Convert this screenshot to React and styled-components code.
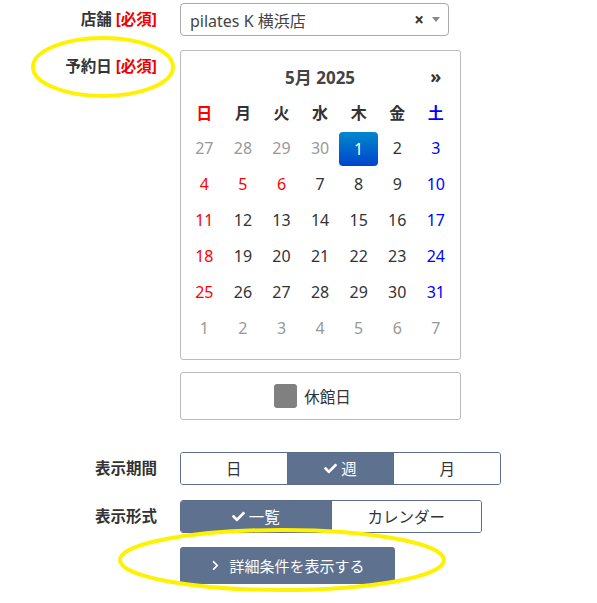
import styled, { createGlobalStyle } from "styled-components"
import { FaCheck, FaChevronRight } from "react-icons/fa"

const GlobalStyle = createGlobalStyle`
    body {
        margin: 0;
        background: #fff;
        font-family: "Noto Sans", "Noto Sans CJK JP", sans-serif;
        color: #333;
    }
`

const Page = styled.div`
    position: relative;
    width: 597px;
    height: 603px;
    padding-top: 3px;
    box-sizing: border-box;
`

const Form = styled.div`
    display: grid;
    grid-template-columns: 157px 280px;
    column-gap: 23px;
    align-items: start;
`

const Label = styled.div`
    text-align: right;
    font-weight: bold;
    font-size: 15.5px;
    line-height: 20px;
    color: #333;
    padding-top: ${({ top }) => top || 0}px;
    margin-top: ${({ gap }) => gap || 0}px;
`

const Req = styled.span`
    color: #e00;
`

const Field = styled.div`
    margin-top: ${({ gap }) => gap || 0}px;
`

const Select = styled.div`
    display: flex;
    align-items: center;
    width: 269px;
    height: 33px;
    box-sizing: border-box;
    border: 1px solid #aaa;
    border-radius: 4px;
    padding: 0 8px 0 9px;
    font-size: 16px;
    color: #444;
`

const SelectText = styled.span`
    flex: 1;
`

const Clear = styled.span`
    font-weight: bold;
    font-size: 17px;
    color: #333;
    margin-right: 8px;
`

const Arrow = styled.span`
    width: 0;
    height: 0;
    border-left: 4px solid transparent;
    border-right: 4px solid transparent;
    border-top: 5px solid #888;
`

const CalendarBox = styled.div`
    width: 281px;
    box-sizing: border-box;
    border: 1px solid #bbb;
    border-radius: 3px;
    padding: 7px 4px 13px;
`

const Grid = styled.div`
    display: grid;
    grid-template-columns: repeat(7, 38.6px);
    grid-auto-rows: 36px;
`

const Title = styled.div`
    grid-column: 2 / 7;
    display: flex;
    align-items: center;
    justify-content: center;
    font-weight: bold;
    font-size: 17px;
    color: #444;
`

const Nav = styled.div`
    grid-column: 7;
    display: flex;
    align-items: center;
    justify-content: center;
    font-weight: bold;
    font-size: 18px;
    color: #333;
`

const Cell = styled.div`
    display: flex;
    align-items: center;
    justify-content: center;
    font-size: 16px;
    font-weight: ${({ head }) => (head ? "bold" : "normal")};
    color: ${({ tone }) =>
        tone === "red" ? "#f00" : tone === "blue" ? "#00f" : tone === "mute" ? "#999" : "#333"};
    border-radius: 4px;
    ${({ active }) =>
        active &&
        `
        margin-top: 2px;
        background: linear-gradient(to bottom, #0088cc, #0044cc);
        color: #fff;
    `}
`

const Legend = styled.div`
    margin-top: 12px;
    width: 281px;
    height: 48px;
    box-sizing: border-box;
    border: 1px solid #bbb;
    border-radius: 3px;
    display: flex;
    align-items: center;
    justify-content: center;
    gap: 7px;
    padding-right: 16px;
    font-size: 15.5px;
    color: #333;
`

const Swatch = styled.span`
    width: 23px;
    height: 24px;
    border-radius: 3px;
    background: #808080;
`

const Group = styled.div`
    display: flex;
    width: ${({ w }) => w}px;
    height: 33px;
    box-sizing: border-box;
    border: 1px solid #5a6d8c;
    border-radius: 3px;
    overflow: hidden;
`

const Seg = styled.div`
    flex: 1;
    display: flex;
    align-items: center;
    justify-content: center;
    gap: 4px;
    font-size: 15.5px;
    background: ${({ on }) => (on ? "#5e7290" : "#fff")};
    color: ${({ on }) => (on ? "#fff" : "#333")};
    & + & {
        border-left: 1px solid #5a6d8c;
    }
    svg {
        font-size: 13px;
    }
`

const DetailButton = styled.div`
    display: flex;
    align-items: center;
    justify-content: center;
    gap: 8px;
    width: 215px;
    height: 37px;
    margin-top: 14px;
    border-radius: 3px;
    background: #5e7290;
    color: #fff;
    font-size: 15px;
    svg {
        font-size: 11px;
    }
`

const Mark = styled.svg`
    position: absolute;
    left: 0;
    top: 0;
    pointer-events: none;
`

const weekdays = [
    ["日", "red"],
    ["月"],
    ["火"],
    ["水"],
    ["木"],
    ["金"],
    ["土", "blue"],
]

const days = [
    [27, 28, 29, 30, 1, 2, 3],
    [4, 5, 6, 7, 8, 9, 10],
    [11, 12, 13, 14, 15, 16, 17],
    [18, 19, 20, 21, 22, 23, 24],
    [25, 26, 27, 28, 29, 30, 31],
    [1, 2, 3, 4, 5, 6, 7],
]

// holidays shown in red (GW)
const holidays = [5, 6]

const toneFor = (row, col, day) => {
    if (row === 0 && day > 7) return "mute"
    if (row === 5) return "mute"
    if (col === 0 || (holidays.includes(day) && row === 1)) return "red"
    if (col === 6) return "blue"
    return ""
}

const App = () => {
    return (
        <Page>
            <GlobalStyle />
            <Form>
                <Label top={6}>
                    店舗 <Req>[必須]</Req>
                </Label>
                <Field>
                    <Select>
                        <SelectText>pilates K 横浜店</SelectText>
                        <Clear>×</Clear>
                        <Arrow />
                    </Select>
                </Field>

                <Label gap={14} top={6}>
                    予約日 <Req>[必須]</Req>
                </Label>
                <Field gap={14}>
                    <CalendarBox>
                        <Grid>
                            <Title>5月 2025</Title>
                            <Nav>»</Nav>
                            {weekdays.map(([w, tone]) => (
                                <Cell head tone={tone} key={w}>
                                    {w}
                                </Cell>
                            ))}
                            {days.map((week, r) =>
                                week.map((d, c) => (
                                    <Cell
                                        key={`${r}-${c}`}
                                        tone={toneFor(r, c, d)}
                                        active={r === 0 && d === 1}
                                    >
                                        {d}
                                    </Cell>
                                ))
                            )}
                        </Grid>
                    </CalendarBox>
                    <Legend>
                        <Swatch />
                        休館日
                    </Legend>
                </Field>

                <Label gap={32} top={6}>
                    表示期間
                </Label>
                <Field gap={32}>
                    <Group w={321}>
                        <Seg>日</Seg>
                        <Seg on>
                            <FaCheck />週
                        </Seg>
                        <Seg>月</Seg>
                    </Group>
                </Field>

                <Label gap={15} top={6}>
                    表示形式
                </Label>
                <Field gap={15}>
                    <Group w={302}>
                        <Seg on>
                            <FaCheck />一覧
                        </Seg>
                        <Seg>カレンダー</Seg>
                    </Group>
                    <DetailButton>
                        <FaChevronRight />
                        詳細条件を表示する
                    </DetailButton>
                </Field>
            </Form>

            <Mark width="597" height="603">
                <ellipse cx="103" cy="67" rx="70" ry="29" fill="none" stroke="#fff200" strokeWidth="4" />
                <ellipse cx="282" cy="560" rx="162" ry="30" fill="none" stroke="#fff200" strokeWidth="4" />
            </Mark>
        </Page>
    )
}

export default App
